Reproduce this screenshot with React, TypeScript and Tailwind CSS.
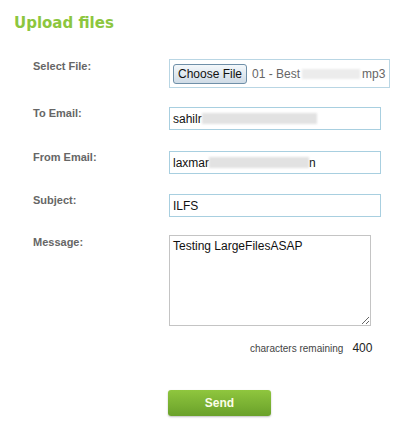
import { useState } from 'react';

const labelCls = "w-[169px] shrink-0 pl-[33px] text-[11px] leading-[13px] font-bold text-[#666] font-['Liberation_Sans',Arial,sans-serif]";
const inputCls = "h-[23px] w-[212px] border border-[#a8cfe0] bg-white px-[3px] text-[12px] text-[#111] font-['Liberation_Sans',Arial,sans-serif] outline-none";

export default function App() {
  const [message, setMessage] = useState('Testing LargeFilesASAP');

  return (
    <div className="w-[400px] h-[423px] bg-white pt-[13px] font-['Liberation_Sans',Arial,sans-serif]">
      <h1 className="pl-[14px] text-[15px] font-bold text-[#8cc63e] font-['DejaVu_Sans',Verdana,sans-serif] leading-[20px]">
        Upload files
      </h1>

      <div className="mt-[26px] flex flex-col">
        <div className="flex items-start">
          <div className={`${labelCls} pt-[1px]`}>Select File:</div>
          <div className="flex h-[29px] w-[221px] shrink-0 items-center overflow-hidden whitespace-nowrap border border-[#b9d6e4] px-[3px]">
            <span className="flex h-[20px] shrink-0 items-center rounded-[3px] border border-[#6f8fa8] bg-gradient-to-b from-[#f4f8fb] to-[#cfdbe6] px-[4px] text-[12px] text-[#111]">
              Choose File
            </span>
            <span className="ml-[5px] flex items-center text-[12px] text-[#666]">
              01 - Best<span className="mx-[2px] inline-block h-[10px] w-[58px] bg-[#ececec] blur-[1px]" />mp3
            </span>
          </div>
        </div>

        <div className="mt-[19px] flex items-start">
          <div className={labelCls}>To Email:</div>
          <div className={`flex items-center ${inputCls}`}>
            sahilr<span className="inline-block h-[11px] w-[115px] bg-[#e2e2e2] blur-[1px]" />
          </div>
        </div>

        <div className="mt-[21px] flex items-start">
          <div className={labelCls}>From Email:</div>
          <div className={`flex items-center ${inputCls}`}>
            laxmar<span className="inline-block h-[11px] w-[100px] bg-[#e2e2e2] blur-[1px]" />n
          </div>
        </div>

        <div className="mt-[20px] flex items-start">
          <div className={labelCls}>Subject:</div>
          <input className={inputCls} defaultValue="ILFS" />
        </div>

        <div className="mt-[18px] flex items-start">
          <div className={`${labelCls} pt-[1px]`}>Message:</div>
          <textarea
            className="h-[91px] w-[202px] resize-y border border-[#c4c4c4] bg-white px-[3px] py-[3px] text-[12px] leading-[14px] text-[#111] outline-none font-['Liberation_Sans',Arial,sans-serif]"
            value={message}
            onChange={(e) => setMessage(e.target.value)}
          />
        </div>

        <div className="mt-[16px] flex items-center pl-[250px] text-[10px] leading-[13px] text-[#444]">
          <span>characters remaining</span>
          <span className="ml-[9px] text-[12px] text-[#222]">400</span>
        </div>

        <div className="mt-[35px] pl-[168px]">
          <button className="h-[26px] w-[103px] rounded-[3px] bg-gradient-to-b from-[#8fc63e] to-[#6aa12a] text-[12px] font-bold text-[#fbfde8] shadow-[0_1px_2px_rgba(0,0,0,0.25)]">
            Send
          </button>
        </div>
      </div>
    </div>
  );
}
